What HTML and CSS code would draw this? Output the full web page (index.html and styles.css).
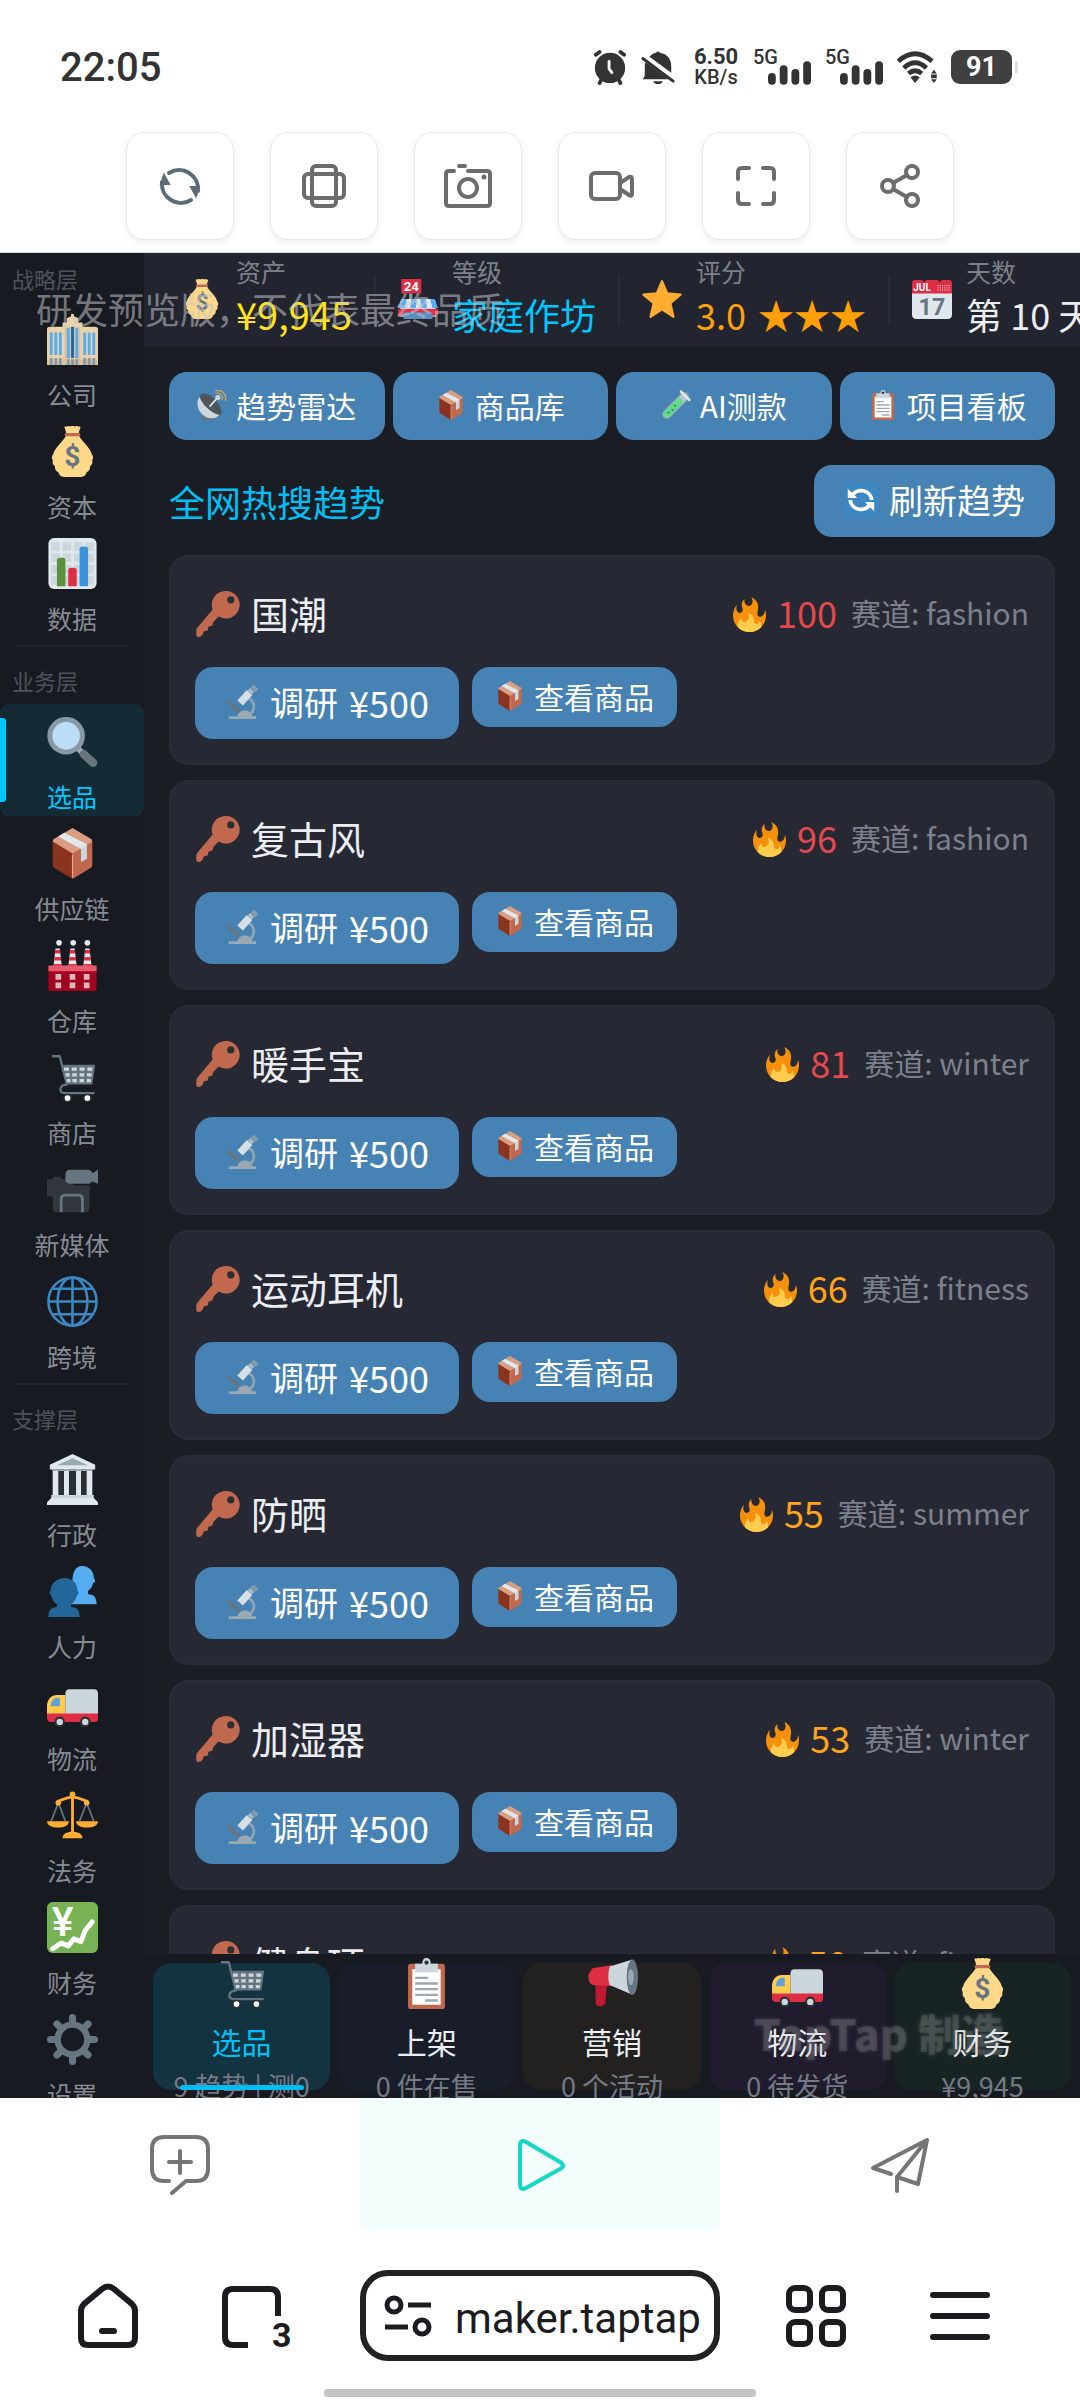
FILE: index.html
```html
<!DOCTYPE html>
<html lang="zh-CN">
<head>
    <meta charset="UTF-8">
    <meta name="viewport" content="width=device-width, initial-scale=1.0">
    <title>全网热搜趋势</title>
    <link rel="stylesheet" href="styles.css">
</head>
<body>

    <!-- Icon sprite -->
    <svg class="sprite" aria-hidden="true">
        <symbol id="i-company" viewBox="0 0 36 36">
            <path fill="#ead2ac" d="M0 11q0-2 2-2h9V6h3V3l3-1.500V0h2v1.500L22 3v3h3v3h9q2 0 2 2v25H0z"/>
            <path fill="#dcc3a0" d="M12.500 9h11v27h-11zM0 32h36v4H0z"/>
            <path fill="#55acee" d="M2 13h2v16H2zm3.200 0h2v16h-2zm3.200 0h2v16h-2zM25.600 13h2v16h-2zm3.200 0h2v16h-2zm3.200 0h2v16h-2zM14 10h2v21h-2zm6 0h2v21h-2z"/>
            <path fill="#226699" d="M17 9h2v22h-2z"/>
            <path fill="#8899a6" d="M2 31h2v5H2zm3.200 0h2v5h-2zm3.200 0h2v5h-2zM25.600 31h2v5h-2zm3.200 0h2v5h-2zm3.200 0h2v5h-2zM14 32h2v4h-2zm3 0h2v4h-2zm3 0h2v4h-2z"/>
        </symbol>
        <symbol id="i-money" viewBox="0 0 36 36">
            <path fill="#fdd888" d="M12.500 1.500C12 0 13 0 14 .6c.8-1 1.800-.8 2.300 0 .8-1 2.600-1 3.400 0 .6-.8 1.700-1 2.300 0 1.200-.6 2 0 1.500 1-.6 1.200-1 2.500-1 3.900h-9c0-1.400-.5-2.800-1-4z"/>
            <path fill="#fdd888" d="M13.300 7h9.400c1.300 2.700 4.300 5.300 6 7.600 1.400 1.900 2.600 3.500 2.900 5.400 1.200 1.300 1.300 2.800.3 4.200.5 1.800-.1 3.300-1.500 4.200.2 2-.7 3.500-2.400 4.300-.6 2.200-1.900 3.200-4 3.300H12c-2.100-.1-3.400-1.100-4-3.300-1.700-.8-2.600-2.300-2.400-4.300-1.400-.9-2-2.400-1.500-4.200-1-1.400-.9-2.900.3-4.200.3-1.900 1.500-3.500 2.900-5.400 1.700-2.300 4.700-4.900 6-7.600z"/>
            <rect x="12.500" y="5" width="11" height="2.300" rx="1" fill="#bf6952"/>
            <text class="glyph" x="18" y="28" font-size="20" text-anchor="middle" fill="#67757f">$</text>
        </symbol>
        <symbol id="i-chart" viewBox="0 0 36 36">
            <rect x="1" width="34" height="36" rx="4" fill="#e1e8ed"/>
            <path fill="#ccd6dd" d="M3 3h6v6H3zm8 0h6v6h-6zm8 0h6v6h-6zm8 0h6v6h-6zM3 11h6v6H3zm8 0h6v6h-6zm8 0h6v6h-6zm8 0h6v6h-6zM3 19h6v6H3zm8 0h6v6h-6zm8 0h6v6h-6zm8 0h6v6h-6zM3 27h6v6H3zm8 0h6v6h-6zm8 0h6v6h-6zm8 0h6v6h-6z"/>
            <path fill="#5c913b" d="M7 16q0-2 2-2h2q2 0 2 2v18H7z"/>
            <path fill="#dd2e44" d="M15 23q0-2 2-2h2q2 0 2 2v11h-6z"/>
            <path fill="#3b94d9" d="M23 8q0-2 2-2h2q2 0 2 2v26h-6z"/>
        </symbol>
        <symbol id="i-search" viewBox="0 0 36 36">
            <path stroke="#9aaab4" stroke-width="4" d="m20 21 6 6"/>
            <path stroke="#66757f" stroke-width="6" stroke-linecap="round" d="m26 27 6.500 6"/>
            <circle cx="13.500" cy="14" r="11.500" fill="#bbddf5" stroke="#8899a6" stroke-width="3.500"/>
        </symbol>
        <symbol id="i-box" viewBox="0 0 36 36">
            <path fill="#d99e82" d="M18 0 4.500 8 4 10l14 9 14-9-.5-2z"/>
            <path fill="#8a3420" d="M4 9.500 18 18v18L5 28q-1-.6-1-2z"/>
            <path fill="#c1694f" d="M32 9.500 18 18v18l13-8q1-.6 1-2z"/>
            <path fill="#ccd6dd" d="m24 14 4.200-2.600v10.300L24 24z"/>
            <path fill="#e1e8ed" d="m8 6 4.200-2.600 16 8L24 14.800z"/>
            <path stroke="#e8a98c" stroke-width=".8" d="M18 19v16"/>
        </symbol>
        <symbol id="i-factory" viewBox="0 0 36 36">
            <path fill="#e1e8ed" d="m6 6-1.500 13h6L9 6zm10.500 0L15 19h6L19.500 6zM27 6l-1.500 13h6L30 6z"/>
            <path fill="#dd2e44" d="M5.800 7h3.400l.3 2.500H5.500zm-.5 5h4.500l.2 2.500H5zm-.5 5h5.500l.2 2H4.500zM16.300 7h3.400l.3 2.500h-4zm-.5 5h4.500l.2 2.500h-5zm-.5 5h5.500l.2 2H15zM26.800 7h3.400l.3 2.500h-4zm-.5 5h4.500l.2 2.500h-5zm-.5 5h5.500l.2 2h-6z"/>
            <circle cx="8.500" cy="2" r="2" fill="#e1e8ed"/><circle cx="18.500" cy="2" r="2" fill="#e1e8ed"/><circle cx="28.500" cy="2" r="2" fill="#e1e8ed"/>
            <path fill="#a0041e" d="M1 19h34v15q0 2-2 2H3q-2 0-2-2z"/>
            <path fill="#e75a70" d="M1 18h34v4H1z"/>
            <path fill="#dcb5bd" d="M6 24h4v4H6zm10 0h4v4h-4zm10 0h4v4h-4zM6 30h4v4H6zm10 0h4v4h-4zm10 0h4v4h-4z"/>
        </symbol>
        <symbol id="i-cart" viewBox="0 0 36 36">
            <path fill="none" stroke="#66757f" stroke-width="1.600" stroke-linecap="round" stroke-linejoin="round" d="M4 3h5l5 20c-5 0-6.500 6-1.500 6H33"/>
            <path fill="#66757f" d="M10 9h24l-2 14H13.500z"/>
            <path fill="#ccd6dd" d="M12 11h3.500v2.300H12zm5.500 0H21v2.300h-3.500zm5.500 0h3.500v2.300H23zm5.500 0H32v2.300h-3.500zM13 15h3v2.300h-3zm4.800 0H21v2.300h-3.200zm5.200 0h3.300v2.300H23zm5.200 0h3.300v2.300h-3.300zM14 19h2.500v2.300H14zm4 0h3v2.300h-3zm5 0h3.100v2.300H23zm5 0h3v2.300h-3z"/>
            <circle cx="14.500" cy="32.500" r="2.500" fill="#fff" stroke="#292f33"/><circle cx="28.500" cy="32.500" r="2.500" fill="#fff" stroke="#292f33"/>
        </symbol>
        <symbol id="i-camera" viewBox="0 0 36 36">
            <path fill="#31373d" d="M0 11h3l2-2h4l2 2h4l4 4h11v16q0 3-3 3H7q-3 0-3-3V23H0z"/>
            <rect x="13" y="4" width="19" height="10" rx="3" fill="#66757f"/>
            <path fill="#66757f" d="m31 7 5-3v10l-5-2z"/>
            <path fill="none" stroke="#66757f" stroke-width="2" d="M10 34V25q0-3 3-3h9q3 0 3 3v9"/>
        </symbol>
        <symbol id="i-globe" viewBox="0 0 36 36">
            <g fill="none" stroke="#3b88c3" stroke-width="1.800">
                <circle cx="18" cy="18" r="17"/><ellipse cx="18" cy="18" rx="10.500" ry="17"/>
                <path d="M18 1v34M1 18h34M4 9h28M4 27h28"/>
            </g>
        </symbol>
        <symbol id="i-bank" viewBox="0 0 36 36">
            <path fill="#292f33" d="M5 11h26v20H5z"/>
            <path fill="#e1e8ed" d="M4 11h4v19H4zm8 0h3.500v19H12zm8.500 0H24v19h-3.500zM28 11h4v19h-4z"/>
            <path fill="#e1e8ed" d="M18 0 2 7.500V11h32V7.500z"/>
            <path fill="#9aaab4" d="m18 3 11 5H7zM4 11h28v1H4z"/>
            <path fill="#ccd6dd" d="M3 29h30v2H3z"/>
            <path fill="#e1e8ed" d="M3 31h30l3 3v2H0v-2z"/>
        </symbol>
        <symbol id="i-people" viewBox="0 0 36 36">
            <path fill="#55acee" d="M24.500 0c5 0 8.500 3.500 8.500 8 0 1 1 1.500 1 2.500s-1 1.300-1.500 1.500c-.5 3-2 4.500-3.500 5.500v2.500c4 0 6 2 6 7H13V20l5-10c0-5 2-10 6.500-10z"/>
            <path fill="#269" d="M12.500 8.500c5.500 0 9 4 9 9 1 .5.800 3-.5 3.500-.6 3-2 4.700-4 6v2c4.500.2 6 2 6 7H1c0-5 2-6.800 6-7v-2c-2-1.300-3.300-3-4-6-1.300-.5-1.500-3-.5-3.500 0-5 4.500-9 10-9z"/>
        </symbol>
        <symbol id="i-truck" viewBox="0 0 36 36">
            <path fill="#ffcc4d" d="M13 12v14H0v-6c0-5 3-8 7-8z"/>
            <path fill="#5da0dd" d="M9 14v6H2.500c.8-4 2.500-6 4.500-6z"/>
            <path fill="#ccd6dd" d="M13 11q0-3 3-3h17q3 0 3 3v15H13z"/>
            <path fill="#dd2e44" d="M0 25h36v4q0 2-2 2H3q-3 0-3-3z"/>
            <circle cx="9" cy="31" r="3" fill="#ccd6dd" stroke="#292f33" stroke-width="1.500"/><circle cx="27" cy="31" r="3" fill="#ccd6dd" stroke="#292f33" stroke-width="1.500"/>
        </symbol>
        <symbol id="i-scales" viewBox="0 0 36 36">
            <path fill="none" stroke="#66757f" stroke-width="1.200" d="M8 9 3 22M8 9l5 13M28 9l-5 13M28 9l5 13"/>
            <path fill="#ffac33" d="M17 4h2v26h-2zM0 22h15.500c0 3-3.500 4.500-7.700 4.500S0 25 0 22zm20.500 0H36c0 3-3.500 4.500-7.700 4.500s-7.800-1.500-7.800-4.500zM11 34c0-3 3-4.500 7-4.500s7 1.500 7 4.500z"/>
            <path fill="none" stroke="#ffac33" stroke-width="2" d="M7 8c3 0 5-3 11-3s8 3 11 3"/>
            <circle cx="18" cy="3" r="2" fill="#ffac33"/><circle cx="8" cy="9" r="2" fill="#ffac33"/><circle cx="28" cy="9" r="2" fill="#ffac33"/>
        </symbol>
        <symbol id="i-yen" viewBox="0 0 36 36">
            <rect width="36" height="36" rx="4" fill="#77b255"/>
            <text class="glyph yen" x="11" y="24" font-size="29" text-anchor="middle" fill="#fff">¥</text>
            <path fill="none" stroke="#fff" stroke-width="3.500" stroke-linecap="round" stroke-linejoin="round" d="m4 33 6-4 5 2 4-5 5 2 3-8 5-6"/>
        </symbol>
        <symbol id="i-gear" viewBox="0 0 36 36">
            <g stroke="#66757f" fill="none">
                <circle cx="18" cy="18" r="10.500" stroke-width="4.500"/>
                <path stroke-width="5" stroke-linecap="round" d="M18 2.500V6M18 30v3.500M2.500 18H6M30 18h3.500M7 7l2 2M27 27l2 2M29 7l-2 2M9 27l-2 2"/>
            </g>
        </symbol>
        <symbol id="i-store" viewBox="0 0 36 36">
            <path fill="#ccd6dd" d="M2 20h32v14H2z"/>
            <path fill="#dd2e44" d="M0 27h36v6H0z"/>
            <path fill="#5c8fc0" d="M5 30h26v6H5z"/>
            <path fill="#dd2e44" d="M3 0h18v13H3z"/>
            <path fill="#8899a6" d="M10 13h3v5h-3z"/>
            <path fill="#55acee" d="M3 18h30l3 8H0z"/>
            <path fill="#e1e8ed" d="M8 18h4l-1 8H6zm9 0h3l1 8h-5zm8 0h4l2 8h-5z"/>
            <text class="glyph" x="12" y="11" font-size="12" text-anchor="middle" fill="#fff">24</text>
        </symbol>
        <symbol id="i-star" viewBox="0 0 36 36">
            <path fill="#ffac33" stroke="#ffac33" stroke-width="2" stroke-linejoin="round" d="m18 2 4.700 11 12 1-9.200 7.800L28.300 34 18 27.300 7.700 34l2.800-12.200L1.300 14l12-1z"/>
        </symbol>
        <symbol id="i-calendar" viewBox="0 0 36 36">
            <path fill="#e1e8ed" d="M0 11h36v21q0 4-4 4H4q-4 0-4-4z"/>
            <path fill="#dd2e44" d="M0 4q0-3 3-3h6l2 2 2-2h10l2 2 2-2h6q3 0 3 3v9H0z"/>
            <text class="glyph" x="9" y="11" font-size="9" text-anchor="middle" fill="#fff">JUL</text>
            <text class="glyph" x="18" y="32" font-size="21" text-anchor="middle" fill="#66757f">17</text>
            <path stroke="#f4abba" stroke-width="1" stroke-dasharray="1 1" d="M23 6h11M23 8h11M23 10h11"/>
        </symbol>
        <symbol id="i-radar" viewBox="0 0 36 36">
            <path fill="#66757f" d="M5 36 10 25l9 5 2 6z"/>
            <ellipse cx="16" cy="18" rx="9" ry="17" transform="rotate(-43 16 18)" fill="#4d565d"/>
            <path fill="#ccd6dd" d="M3 8c3 9 13 19 24 22-7 7-17 4-22-2S-1 14 3 8z"/>
            <path stroke="#e1e8ed" stroke-width="2" d="m15 20 10-11"/>
            <circle cx="25" cy="9" r="3" fill="#ccd6dd"/>
            <path fill="none" stroke="#c9a368" stroke-width="1.800" d="M22 4c5-2 10 3 8 8M22 1c8-2 14 4 12 12"/>
        </symbol>
        <symbol id="i-tube" viewBox="0 0 36 36">
            <path stroke="#9aaab4" stroke-width="11" stroke-linecap="round" d="M7 29 28 8"/>
            <path stroke="#b5c8d3" stroke-width="8" d="m22 14 8-8"/>
            <path stroke="#5fdc8b" stroke-width="8" stroke-linecap="round" d="m7 29 15-15"/>
            <path stroke="#e1e8ed" stroke-width="3" stroke-linecap="round" d="m24 2 10 10"/>
            <circle cx="9" cy="27" r="1.300" fill="#27884b"/><circle cx="14" cy="24" r="1.300" fill="#27884b"/><circle cx="17" cy="19" r="1.300" fill="#27884b"/>
        </symbol>
        <symbol id="i-clipboard" viewBox="0 0 36 36">
            <rect x="5" y="4" width="26" height="32" rx="2" fill="#c1694f"/>
            <path fill="#fff" d="M8 8h20v25H8z"/>
            <path fill="#ccd6dd" d="M10 4h5q0-4 3-4t3 4h5v6H10z"/>
            <circle cx="18" cy="3.200" r="1.500" fill="#292f33"/>
            <path stroke="#99aab5" stroke-width="1.600" d="M10 14h9M10 18h16M10 22h16M10 26h16M17 30h9"/>
        </symbol>
        <symbol id="i-refresh" viewBox="0 0 36 36">
            <rect width="36" height="36" rx="4" fill="#3b88c3"/>
            <path fill="none" stroke="#fff" stroke-width="4" d="M8 14a11.500 11.500 0 0 1 21.500 4M28 22a11.500 11.500 0 0 1-21.500-4"/>
            <path fill="#fff" d="M4 6v10h10zM32 30V20H22z"/>
        </symbol>
        <symbol id="i-key" viewBox="0 0 36 36">
            <path fill="#c1694f" d="M24 0a10.800 10.800 0 0 0-10.200 14.500L2 28.500q-1 1-1 2.500v3q0 2 2 2 1.500 0 3-2l1-2.500 3-.5.5-3 3-1 1-3 4-4A10.800 10.800 0 1 0 24 0z"/>
            <circle cx="28" cy="7" r="2.800" fill="#292f33"/>
        </symbol>
        <symbol id="i-fire" viewBox="0 0 36 36">
            <path fill="#f4900c" d="M35 19c0-2.062-.367-4.039-1.040-5.868-.46 5.389-3.333 8.157-6.335 6.868-2.812-1.208-.917-5.917-.777-8.164.236-3.809-.012-8.169-6.931-11.794 2.875 5.500.333 8.917-2.333 9.125-2.958.231-5.667-2.542-4.667-7.042-3.238 2.386-3.332 6.402-2.333 9 1.042 2.708-.042 4.958-2.583 5.208-2.840.28-4.418-3.041-2.963-8.333C2.520 10.965 1 14.805 1 19c0 9.389 7.611 17 17 17s17-7.611 17-17z"/>
            <path fill="#ffcc4d" d="M28.394 23.999c.148 3.084-2.561 4.293-4.019 3.709-2.106-.843-1.541-2.291-2.083-5.291s-2.625-5.083-5.708-6c2.250 6.333-1.247 8.667-3.080 9.084-1.872.426-3.753-.001-3.968-4.007C7.352 23.668 6 26.676 6 30c0 .368.023.73.055 1.090C9.125 34.124 13.342 36 18 36s8.875-1.876 11.945-4.910c.032-.36.055-.722.055-1.090 0-2.187-.584-4.236-1.606-6.001z"/>
        </symbol>
        <symbol id="i-scope" viewBox="0 0 36 36">
            <path fill="none" stroke="#8fa3b3" stroke-width="3" d="M25 14c8 4 7 15-1 18"/>
            <path fill="#99a9b3" d="M4 33h29v3H4zM13 33q2-6 8-6t8 6z"/>
            <path stroke="#66757f" stroke-width="4" d="m3 17 12 11"/>
            <path stroke="#d5dfe5" stroke-width="8" d="M16 19 26 8"/>
            <path stroke="#a9b7c0" stroke-width="6" d="m26 8 3-3"/>
            <path stroke="#8b9ba5" stroke-width="7" d="m30 5 3-3"/>
        </symbol>
        <symbol id="i-horn" viewBox="0 0 36 36">
            <path fill="#be1931" d="M6 18h8l-1 14q-1 2-4 2t-3-3z"/>
            <path fill="#dd2e44" d="M3 9q0-2 2-2l13-2v15L4 19q-3-1-3-5t2-5z"/>
            <path fill="#ccd6dd" d="m16 6 16-5v25l-16-7q-2-6 0-13z"/>
            <ellipse cx="32" cy="13.500" rx="4" ry="12.500" fill="#66757f"/><ellipse cx="31" cy="13.500" rx="2" ry="5.500" fill="#99aab5"/>
        </symbol>
    </svg>

    <header class="status-bar">
        <span class="clock">22:05</span>
        <div class="status-icons">
            <svg class="status-icon" viewBox="0 0 36 36">
                <circle cx="18" cy="19" r="16" fill="#333"/>
                <path stroke="#333" stroke-width="4" stroke-linecap="round" d="m3 5 4-3M33 5l-4-3M9 31l-2 4M27 31l2 4"/>
                <path fill="none" stroke="#fff" stroke-width="3" stroke-linecap="round" d="M17 12v8l3 4"/>
            </svg>
            <svg class="status-icon" viewBox="0 0 36 36">
                <path fill="#333" d="m2 31 2-4V16q1-6 6-10 3-3 6-3 2-3 4 0 12 2 12 15v13zM13 33h10q-1 3-5 3t-5-3z"/>
                <path stroke="#fff" stroke-width="7" d="M0 5 37 32"/>
                <path stroke="#333" stroke-width="3" stroke-linecap="round" d="m2 9 32 24"/>
            </svg>
            <div class="net-speed"><b>6.50</b><span>KB/s</span></div>
            <div class="signal"><span>5G</span>
                <svg viewBox="0 0 44 24"><path stroke="#333" stroke-width="8" stroke-linecap="round" d="M4 16v4M16 8v12M28 12v8M40 4v16"/></svg>
            </div>
            <div class="signal"><span>5G</span>
                <svg viewBox="0 0 44 24"><path stroke="#333" stroke-width="8" stroke-linecap="round" d="M4 16v4M16 8v12M28 12v8M40 4v16"/></svg>
            </div>
            <svg class="wifi" viewBox="0 0 42 34">
                <g fill="none" stroke="#333" stroke-width="5"><path d="M1 11q18-16 36 0M7 18q12-11 24 0M12 24q7-6 14 0"/></g>
                <path fill="#333" d="M14 28q5-4 10 0l-5 6zM36 24l3-4 3 4zM36 30l3 4 3-4zM36 25h6v4h-6z"/>
            </svg>
            <span class="battery">91</span>
        </div>
    </header>

    <div class="tools">
        <button class="tool" aria-label="刷新"><svg viewBox="0 0 48 48" class="tool-blue">
            <path d="M13 11A19 19 0 0 1 42 29M35 38A19 19 0 0 1 6 20"/>
            <path class="solid" d="m8 13-3 9h8zM40 34l3-9h-8z"/></svg></button>
        <button class="tool" aria-label="旋转"><svg viewBox="0 0 48 48"><rect x="12" y="4" width="24" height="40" rx="4"/><rect x="4" y="12" width="40" height="24" rx="4"/></svg></button>
        <button class="tool" aria-label="截图"><svg viewBox="0 0 48 48"><path d="M10 9H5q-3 0-3 3v29q0 3 3 3h38q3 0 3-3V12q0-3-3-3H24M15 4h6"/><circle cx="24" cy="26" r="9"/><circle class="solid grey" cx="40" cy="15" r="1.500"/></svg></button>
        <button class="tool" aria-label="录像"><svg viewBox="0 0 48 48"><rect x="3" y="11" width="29" height="26" rx="4"/><path d="m32 21 9-6q3-1 3 2v15q0 3-3 1l-9-6"/></svg></button>
        <button class="tool" aria-label="全屏"><svg viewBox="0 0 48 48"><path d="M6 17V10q0-4 4-4h7M31 6h7q4 0 4 4v7M42 31v7q0 4-4 4h-7M17 42h-7q-4 0-4-4v-7"/></svg></button>
        <button class="tool" aria-label="分享"><svg viewBox="0 0 48 48"><circle cx="12" cy="24" r="6"/><circle cx="36" cy="10" r="6"/><circle cx="36" cy="38" r="6"/><path d="m17 21 14-8M17 27l14 8"/></svg></button>
    </div>

    <div class="game">
        <nav class="sidebar">
            <div class="nav-group">
                <h2 class="nav-title">战略层</h2>
                <button class="nav-item"><svg class="icon"><use href="#i-company"/></svg>公司</button>
                <button class="nav-item"><svg class="icon"><use href="#i-money"/></svg>资本</button>
                <button class="nav-item"><svg class="icon"><use href="#i-chart"/></svg>数据</button>
            </div>
            <div class="nav-group">
                <h2 class="nav-title">业务层</h2>
                <button class="nav-item active"><svg class="icon"><use href="#i-search"/></svg>选品</button>
                <button class="nav-item"><svg class="icon"><use href="#i-box"/></svg>供应链</button>
                <button class="nav-item"><svg class="icon"><use href="#i-factory"/></svg>仓库</button>
                <button class="nav-item"><svg class="icon"><use href="#i-cart"/></svg>商店</button>
                <button class="nav-item"><svg class="icon"><use href="#i-camera"/></svg>新媒体</button>
                <button class="nav-item"><svg class="icon"><use href="#i-globe"/></svg>跨境</button>
            </div>
            <div class="nav-group">
                <h2 class="nav-title">支撑层</h2>
                <button class="nav-item"><svg class="icon"><use href="#i-bank"/></svg>行政</button>
                <button class="nav-item"><svg class="icon"><use href="#i-people"/></svg>人力</button>
                <button class="nav-item"><svg class="icon"><use href="#i-truck"/></svg>物流</button>
                <button class="nav-item"><svg class="icon"><use href="#i-scales"/></svg>法务</button>
                <button class="nav-item"><svg class="icon"><use href="#i-yen"/></svg>财务</button>
                <button class="nav-item"><svg class="icon"><use href="#i-gear"/></svg>设置</button>
            </div>
        </nav>

        <div class="main">
            <div class="stats">
                <div class="stat"><svg class="icon"><use href="#i-money"/></svg><div class="stat-text"><div class="stat-label">资产</div><div class="stat-value yellow">¥9,945</div></div></div>
                <div class="stat"><svg class="icon"><use href="#i-store"/></svg><div class="stat-text"><div class="stat-label">等级</div><div class="stat-value cyan">家庭作坊</div></div></div>
                <div class="stat"><svg class="icon"><use href="#i-star"/></svg><div class="stat-text"><div class="stat-label">评分</div><div class="stat-value orange">3.0 <span class="stars">★★★</span></div></div></div>
                <div class="stat"><svg class="icon"><use href="#i-calendar"/></svg><div class="stat-text"><div class="stat-label">天数</div><div class="stat-value">第 10 天</div></div></div>
            </div>

            <div class="content">
                <div class="actions">
                    <button class="btn btn-tab"><svg class="icon"><use href="#i-radar"/></svg>趋势雷达</button>
                    <button class="btn btn-tab"><svg class="icon"><use href="#i-box"/></svg>商品库</button>
                    <button class="btn btn-tab"><svg class="icon"><use href="#i-tube"/></svg>AI测款</button>
                    <button class="btn btn-tab"><svg class="icon"><use href="#i-clipboard"/></svg>项目看板</button>
                </div>
                <div class="section-head">
                    <h1>全网热搜趋势</h1>
                    <button class="btn btn-large"><svg class="icon"><use href="#i-refresh"/></svg>刷新趋势</button>
                </div>
                <div class="trends">
                    <div class="card">
                        <div class="card-head">
                            <svg class="icon key"><use href="#i-key"/></svg><h3>国潮</h3>
                            <svg class="icon fire"><use href="#i-fire"/></svg><span class="heat hot">100</span><span class="track">赛道: fashion</span>
                        </div>
                        <div class="card-actions">
                            <button class="btn btn-large"><svg class="icon"><use href="#i-scope"/></svg>调研 <span class="price">¥500</span></button>
                            <button class="btn btn-small"><svg class="icon"><use href="#i-box"/></svg>查看商品</button>
                        </div>
                    </div>
                    <div class="card">
                        <div class="card-head">
                            <svg class="icon key"><use href="#i-key"/></svg><h3>复古风</h3>
                            <svg class="icon fire"><use href="#i-fire"/></svg><span class="heat hot">96</span><span class="track">赛道: fashion</span>
                        </div>
                        <div class="card-actions">
                            <button class="btn btn-large"><svg class="icon"><use href="#i-scope"/></svg>调研 <span class="price">¥500</span></button>
                            <button class="btn btn-small"><svg class="icon"><use href="#i-box"/></svg>查看商品</button>
                        </div>
                    </div>
                    <div class="card">
                        <div class="card-head">
                            <svg class="icon key"><use href="#i-key"/></svg><h3>暖手宝</h3>
                            <svg class="icon fire"><use href="#i-fire"/></svg><span class="heat hot">81</span><span class="track">赛道: winter</span>
                        </div>
                        <div class="card-actions">
                            <button class="btn btn-large"><svg class="icon"><use href="#i-scope"/></svg>调研 <span class="price">¥500</span></button>
                            <button class="btn btn-small"><svg class="icon"><use href="#i-box"/></svg>查看商品</button>
                        </div>
                    </div>
                    <div class="card">
                        <div class="card-head">
                            <svg class="icon key"><use href="#i-key"/></svg><h3>运动耳机</h3>
                            <svg class="icon fire"><use href="#i-fire"/></svg><span class="heat">66</span><span class="track">赛道: fitness</span>
                        </div>
                        <div class="card-actions">
                            <button class="btn btn-large"><svg class="icon"><use href="#i-scope"/></svg>调研 <span class="price">¥500</span></button>
                            <button class="btn btn-small"><svg class="icon"><use href="#i-box"/></svg>查看商品</button>
                        </div>
                    </div>
                    <div class="card">
                        <div class="card-head">
                            <svg class="icon key"><use href="#i-key"/></svg><h3>防晒</h3>
                            <svg class="icon fire"><use href="#i-fire"/></svg><span class="heat">55</span><span class="track">赛道: summer</span>
                        </div>
                        <div class="card-actions">
                            <button class="btn btn-large"><svg class="icon"><use href="#i-scope"/></svg>调研 <span class="price">¥500</span></button>
                            <button class="btn btn-small"><svg class="icon"><use href="#i-box"/></svg>查看商品</button>
                        </div>
                    </div>
                    <div class="card">
                        <div class="card-head">
                            <svg class="icon key"><use href="#i-key"/></svg><h3>加湿器</h3>
                            <svg class="icon fire"><use href="#i-fire"/></svg><span class="heat">53</span><span class="track">赛道: winter</span>
                        </div>
                        <div class="card-actions">
                            <button class="btn btn-large"><svg class="icon"><use href="#i-scope"/></svg>调研 <span class="price">¥500</span></button>
                            <button class="btn btn-small"><svg class="icon"><use href="#i-box"/></svg>查看商品</button>
                        </div>
                    </div>
                    <div class="card">
                        <div class="card-head">
                            <svg class="icon key"><use href="#i-key"/></svg><h3>健身环</h3>
                            <svg class="icon fire"><use href="#i-fire"/></svg><span class="heat">50</span><span class="track">赛道: fitness</span>
                        </div>
                    </div>
                </div>
            </div>

            <div class="dock">
                <button class="dock-item active"><svg class="icon"><use href="#i-cart"/></svg><span class="dock-name">选品</span><span class="dock-info">9 趋势 | 测0</span></button>
                <button class="dock-item blue"><svg class="icon"><use href="#i-clipboard"/></svg><span class="dock-name">上架</span><span class="dock-info">0 件在售</span></button>
                <button class="dock-item brown"><svg class="icon"><use href="#i-horn"/></svg><span class="dock-name">营销</span><span class="dock-info">0 个活动</span></button>
                <button class="dock-item purple"><svg class="icon"><use href="#i-truck"/></svg><span class="dock-name">物流</span><span class="dock-info">0 待发货</span></button>
                <button class="dock-item green"><svg class="icon"><use href="#i-money"/></svg><span class="dock-name">财务</span><span class="dock-info">¥9,945</span></button>
            </div>
        </div>

        <div class="preview-note">研发预览版，不代表最终品质</div>
        <div class="brand-mark">TapTap 制造</div>
    </div>

    <div class="page-tabs">
        <button class="page-tab" aria-label="评论"><svg viewBox="0 0 60 60"><path d="M19 46h-5Q2 46 2 34V14Q2 2 14 2h32q12 0 12 12v20q0 12-12 12H36L22 58M30 16v22M19 27h22"/></svg></button>
        <button class="page-tab current" aria-label="运行"><svg viewBox="0 0 60 60"><path d="M10 11q0-7 6-4l34 20q6 4 0 7L16 53q-6 3-6-4z"/></svg></button>
        <button class="page-tab" aria-label="发布"><svg viewBox="0 0 60 60"><path d="m21 39-18-6L57 5l-9 44-21-7L57 5M27 42v14"/></svg></button>
    </div>

    <footer class="browser">
        <div class="browser-nav">
            <button class="nav-btn" aria-label="主页"><svg viewBox="0 0 66 66"><path d="M27 6q6-5 12 0l18 15q3 3 3 7v27q0 7-7 7H13q-7 0-7-7V28q0-4 3-7zM27 48h12"/></svg></button>
            <button class="nav-btn" aria-label="标签页"><svg viewBox="0 0 66 66"><path class="butt" d="M29 62H14q-8 0-8-8V14q0-8 8-8h37q8 0 8 8v19"/><text class="tab-count" x="53" y="64">3</text></svg></button>
            <div class="url-box">
                <svg viewBox="0 0 46 42"><circle cx="9" cy="10" r="7"/><circle cx="37" cy="32" r="7"/><path d="M23 10h23M0 32h23"/></svg>
                <input type="text" value="maker.taptap.cn" aria-label="网址">
            </div>
            <button class="nav-btn" aria-label="应用"><svg viewBox="0 0 66 66"><rect x="6" y="5" width="21" height="22" rx="6"/><rect x="39" y="5" width="21" height="22" rx="6"/><rect x="6" y="39" width="21" height="22" rx="6"/><rect x="39" y="39" width="21" height="22" rx="6"/></svg></button>
            <button class="nav-btn" aria-label="菜单"><svg viewBox="0 0 66 66"><path d="M6 12h54M6 33h54M6 54h54"/></svg></button>
        </div>
        <div class="home-bar"></div>
    </footer>

</body>
</html>
```

FILE: styles.css
```css
* {
    box-sizing: border-box;
}
body {
    margin: 0;
    height: 100vh;
    display: flex;
    flex-direction: column;
    background: #fff;
    color: #eceef2;
    font-family: "Noto Sans CJK SC", sans-serif;
    overflow: hidden;
}
button {
    border: none;
    padding: 0;
    margin: 0;
    background: none;
    color: inherit;
    font-family: inherit;
    cursor: pointer;
}
h1, h2, h3 {
    margin: 0;
    font-weight: 400;
}
.sprite {
    position: absolute;
    width: 0;
    height: 0;
}
.glyph {
    font-family: Roboto, sans-serif;
    font-weight: 700;
}
.yen {
    font-weight: 500;
}
.icon {
    width: 1em;
    height: 1em;
    flex: none;
}

/* Status bar */
.status-bar {
    height: 132px;
    flex: none;
    display: flex;
    align-items: center;
    justify-content: space-between;
    padding: 2px 68px 0 60px;
    color: #333;
    font-family: Roboto, sans-serif;
}
.clock {
    font-size: 40px;
    font-weight: 500;
}
.status-icons {
    display: flex;
    align-items: center;
    gap: 14px;
}
.status-icon {
    width: 34px;
    height: 36px;
}
.net-speed {
    width: 46px;
    margin-left: 4px;
    text-align: center;
    font-size: 20px;
    font-weight: 500;
    line-height: 20px;
    display: flex;
    flex-direction: column;
}
.net-speed b {
    font-size: 22px;
    font-weight: 700;
}
.signal {
    position: relative;
    width: 58px;
    height: 36px;
    display: flex;
    justify-content: flex-end;
    align-items: flex-end;
}
.signal span {
    position: absolute;
    left: 0;
    top: 0;
    font-size: 20px;
    line-height: 16px;
    font-weight: 500;
}
.signal svg {
    width: 43px;
    height: 24px;
}
.wifi {
    width: 40px;
    height: 32px;
}
.battery {
    position: relative;
    width: 61px;
    height: 34px;
    border-radius: 9px;
    background: #404040;
    color: #fff;
    font-size: 27px;
    font-weight: 700;
    line-height: 34px;
    text-align: center;
}
.battery::after {
    content: "";
    position: absolute;
    left: 64px;
    top: 11px;
    width: 3px;
    height: 12px;
    border-radius: 2px;
    background: #ddd;
}

/* Page tools */
.tools {
    display: flex;
    flex: none;
    justify-content: center;
    gap: 36px;
    padding-bottom: 12px;
    border-bottom: 1px solid #d4dcdc;
}
.tool {
    width: 108px;
    height: 108px;
    display: flex;
    align-items: center;
    justify-content: center;
    background: #fff;
    border: 1px solid #e8e8e8;
    border-radius: 18px;
    box-shadow: 0 3px 6px rgba(0, 0, 0, 0.06);
}
.tool svg {
    width: 48px;
    height: 48px;
    fill: none;
    stroke: #6c6c6c;
    stroke-width: 4;
    stroke-linecap: round;
    overflow: visible;
}
.tool .tool-blue {
    stroke: #5b6b7a;
}
.tool .solid {
    fill: #5b6b7a;
    stroke-width: 2;
}
.tool .grey {
    fill: #6c6c6c;
}

/* Game frame */
.game {
    position: relative;
    flex: 1;
    min-height: 0;
    display: flex;
    background: #1b1d24;
    overflow: hidden;
}
.sidebar {
    width: 144px;
    flex: none;
    background: #171a21;
}
.nav-group {
    padding-top: 12px;
}
.nav-group + .nav-group {
    margin-top: 7px;
    padding-top: 22px;
    position: relative;
}
.nav-group + .nav-group::before {
    content: "";
    position: absolute;
    top: 0;
    left: 14px;
    right: 14px;
    height: 2px;
    background: #20232b;
}
.nav-title {
    padding-left: 12px;
    margin-bottom: 11px;
    font-size: 22px;
    line-height: 26px;
    color: #4e525b;
}
.nav-item {
    position: relative;
    width: 100%;
    height: 112px;
    padding-top: 12px;
    display: flex;
    flex-direction: column;
    align-items: center;
    gap: 11px;
    border-radius: 9px;
    color: #868a93;
    font-size: 25px;
    line-height: 36px;
}
.nav-item .icon {
    font-size: 51px;
}
.nav-item.active {
    background: #142b36;
    color: #00c8ff;
}
.nav-item.active::before {
    content: "";
    position: absolute;
    left: 0;
    top: 14px;
    bottom: 14px;
    width: 6px;
    border-radius: 0 3px 3px 0;
    background: #00c8ff;
}
.main {
    flex: 1;
    min-width: 0;
    display: flex;
    flex-direction: column;
}
.stats {
    height: 93px;
    flex: none;
    display: flex;
    align-items: center;
    padding-left: 16px;
    background: #22252f;
    border-bottom: 1px solid #272a33;
    overflow: hidden;
}
.stat {
    position: relative;
    flex: none;
    display: flex;
    align-items: center;
    gap: 14px;
    padding: 0 22px;
    white-space: nowrap;
}
.stat + .stat {
    border-left: 2px solid transparent;
}
.stat + .stat::before {
    content: "";
    position: absolute;
    left: -2px;
    top: 24px;
    height: 50px;
    width: 2px;
    background: #2a2d37;
}
.stat .icon {
    font-size: 40px;
}
.stat-text {
    padding-bottom: 10px;
}
.stat-label {
    color: #7c808a;
    font-size: 25px;
    line-height: 40px;
}
.stat-value {
    font-size: 36px;
    line-height: 46px;
}
.yellow {
    color: #ffe21a;
    font-size: 38px;
}
.cyan {
    color: #00c8ff;
}
.orange {
    color: #ff9f0a;
}
.stars {
    margin-left: 4px;
}

/* Buttons */
.btn {
    display: flex;
    align-items: center;
    justify-content: center;
    background: #4682b4;
    border-radius: 18px;
    color: #fff;
    white-space: nowrap;
}
.btn-tab {
    flex: 1;
    height: 68px;
    padding-bottom: 3px;
    gap: 9px;
    font-size: 30px;
}
.btn-large {
    height: 72px;
    padding: 0 30px 3px;
    gap: 11px;
    font-size: 34px;
}
.btn-small {
    height: 60px;
    padding: 0 23px 3px;
    gap: 9px;
    font-size: 30px;
}
.price {
    font-size: 36px;
}

/* Trend list */
.content {
    flex: 1;
    min-height: 0;
    padding: 26px 25px 0;
    overflow: hidden;
}
.actions {
    display: flex;
    gap: 8px;
}
.section-head {
    display: flex;
    align-items: center;
    justify-content: space-between;
    margin: 25px 0 18px;
}
.section-head h1 {
    color: #00c0f5;
    font-size: 36px;
}
.trends {
    display: flex;
    flex-direction: column;
    gap: 15px;
}
.card {
    padding: 24px;
    background: #262934;
    border: 2px solid #2a2d38;
    border-radius: 20px;
}
.card-head {
    display: flex;
    align-items: center;
    height: 66px;
    margin-bottom: 20px;
}
.card-head h3 {
    flex: 1;
    margin-left: 10px;
    padding-bottom: 4px;
    font-size: 38px;
}
.key {
    font-size: 46px;
}
.fire {
    font-size: 35px;
}
.heat {
    margin: 0 14px 0 10px;
    padding-bottom: 4px;
    color: #ffa31a;
    font-size: 36px;
}
.hot {
    color: #e5484d;
}
.track {
    padding-bottom: 4px;
    color: #7c808c;
    font-size: 30px;
}
.card-actions {
    display: flex;
    align-items: flex-start;
    gap: 13px;
}

/* Bottom dock */
.dock {
    height: 144px;
    flex: none;
    display: flex;
    gap: 8px;
    padding: 9px 9px 8px;
    background: #171a21;
}
.dock-item {
    position: relative;
    flex: 1;
    min-width: 0;
    display: flex;
    flex-direction: column;
    align-items: center;
    border-radius: 18px;
    white-space: nowrap;
}
.dock-item .icon {
    margin-top: -5px;
    font-size: 51px;
}
.dock-name {
    padding: 15px 0 10px;
    font-size: 30px;
    line-height: 34px;
}
.dock-info {
    color: #747984;
    font-size: 27px;
    line-height: 36px;
}
.dock-item.active {
    background: #143340;
}
.dock-item.active .dock-name {
    color: #00c0f5;
}
.dock-item.active::after {
    content: "";
    position: absolute;
    left: 15%;
    right: 15%;
    bottom: 0;
    height: 5px;
    border-radius: 3px;
    background: #00bdf5;
}
.dock-item.blue {
    background: #181d29;
}
.dock-item.brown {
    background: #232120;
}
.dock-item.purple {
    background: #201c2e;
}
.dock-item.green {
    background: #182424;
}

/* Overlays */
.preview-note {
    position: absolute;
    left: 36px;
    top: 29px;
    color: rgba(200, 200, 205, 0.55);
    font-size: 36px;
    line-height: 52px;
    white-space: nowrap;
}
.brand-mark {
    position: absolute;
    right: 76px;
    bottom: 38px;
    color: rgba(170, 170, 170, 0.2);
    font-size: 43px;
    font-weight: 900;
    line-height: 56px;
    text-shadow: 0 0 4px rgba(170, 170, 170, 0.2);
    pointer-events: none;
}

/* Page tabs under the game */
.page-tabs {
    display: flex;
    flex: none;
    height: 133px;
}
.page-tab {
    flex: 1;
    display: flex;
    align-items: center;
    justify-content: center;
}
.page-tab svg {
    width: 60px;
    height: 60px;
    fill: none;
    stroke: #757575;
    stroke-width: 4;
    stroke-linecap: round;
    stroke-linejoin: round;
}
.page-tab.current {
    background: #f2fdfc;
}
.page-tab.current svg {
    stroke: #12d8c4;
}

/* Browser bar */
.browser {
    flex: none;
    padding: 39px 0 3px;
}
.browser-nav {
    display: grid;
    grid-template-columns: 12fr 12fr 35fr 12fr 12fr;
    padding: 0 48px 0 36px;
}
.nav-btn {
    display: flex;
    align-items: center;
    justify-content: center;
}
.nav-btn svg {
    width: 66px;
    height: 66px;
    fill: none;
    stroke: #1b1b20;
    stroke-width: 6;
    stroke-linecap: round;
    overflow: visible;
}
.nav-btn .butt {
    stroke-linecap: butt;
}
.tab-count {
    fill: #1b1b20;
    stroke: none;
    font-family: Roboto, sans-serif;
    font-size: 34px;
    font-weight: 700;
}
.url-box {
    height: 91px;
    min-width: 0;
    margin: 0 24px 0 36px;
    display: flex;
    align-items: center;
    gap: 24px;
    padding: 0 10px 0 19px;
    border: 6px solid #222;
    border-radius: 28px;
}
.url-box svg {
    width: 46px;
    height: 42px;
    flex: none;
    fill: none;
    stroke: #1b1b20;
    stroke-width: 5;
    overflow: visible;
}
.url-box input {
    flex: 1;
    min-width: 0;
    padding: 6px 0 0;
    border: none;
    outline: none;
    background: none;
    color: #1b1b20;
    font-family: Roboto, sans-serif;
    font-size: 42px;
}
.home-bar {
    width: 40%;
    height: 8px;
    margin: 28px auto 0;
    border-radius: 4px;
    background: #c3c3c3;
}
```
